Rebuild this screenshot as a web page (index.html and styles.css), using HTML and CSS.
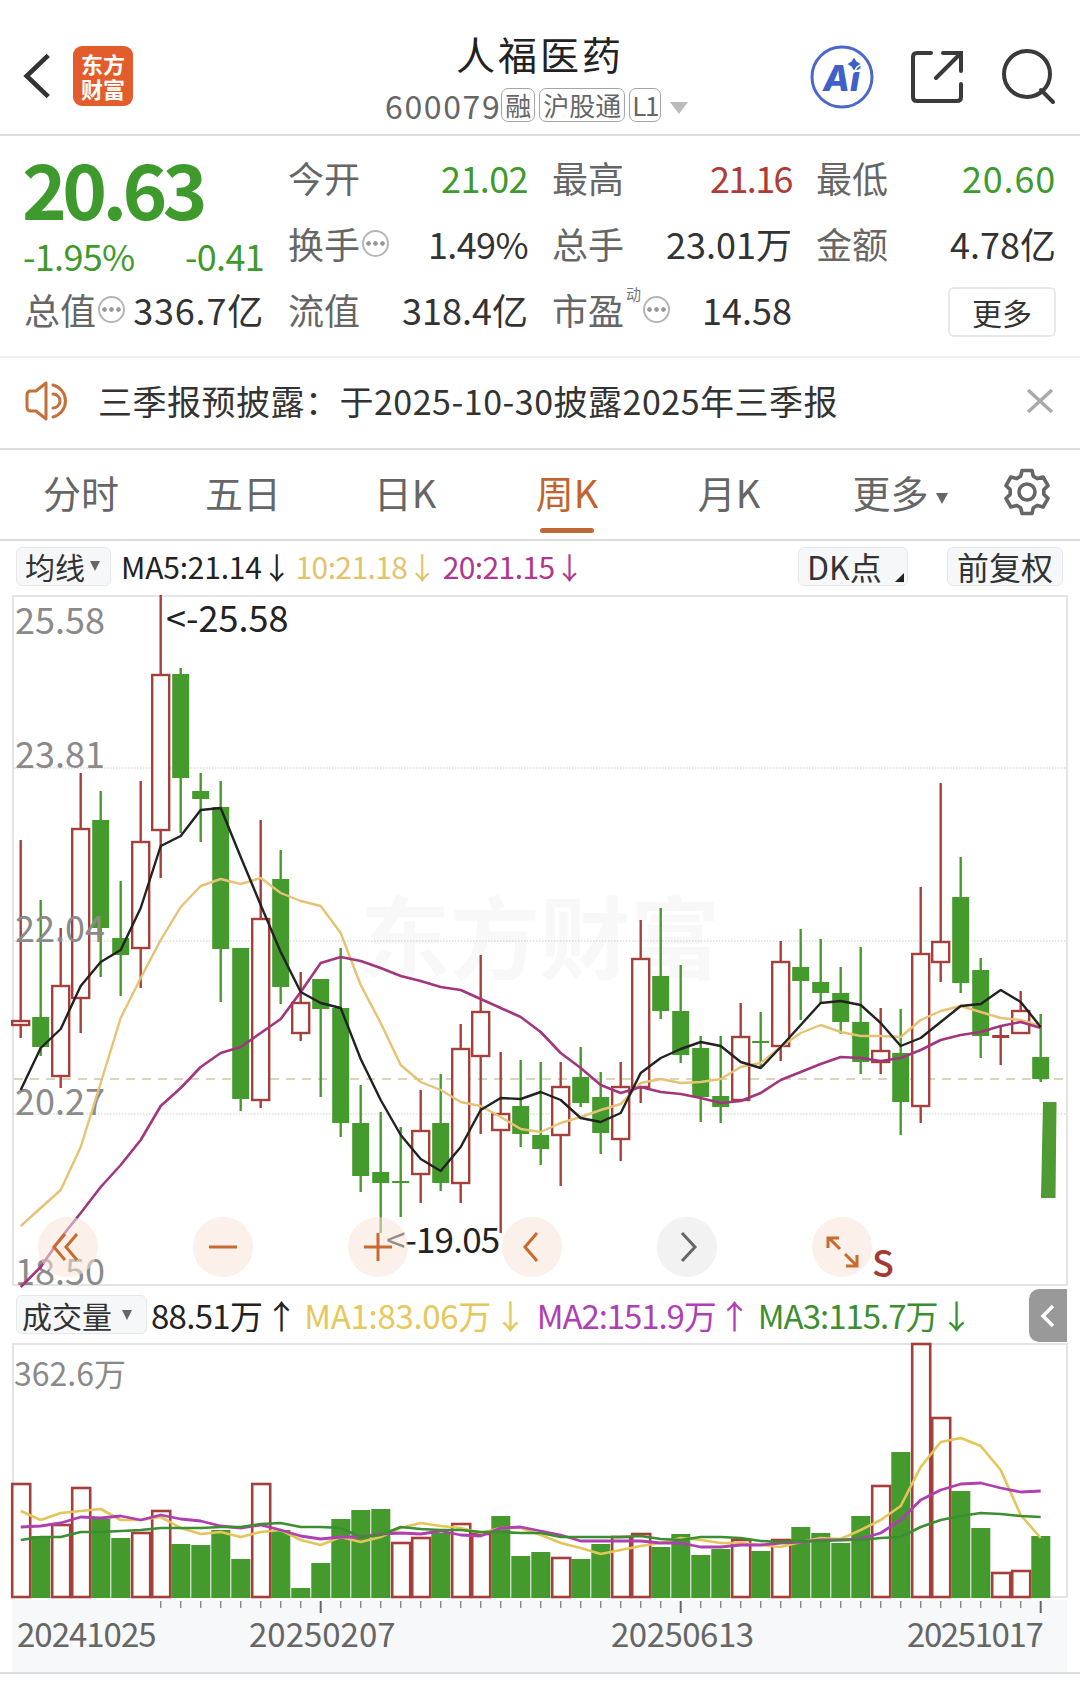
FILE: index.html
```html
<!DOCTYPE html>
<html>
<head>
    <meta charset="UTF-8">
    <title>人福医药</title>
    <link rel="stylesheet" href="styles.css">
</head>
<body>

<header class="top">
    <div class="top-left">
        <svg class="back" viewBox="0 0 32 50"><polyline points="28,3 5,25 28,47"/></svg>
        <div class="logo"><span>东方</span><span>财富</span></div>
    </div>
    <div class="top-mid">
        <div class="stock-name">人福医药</div>
        <div class="stock-sub">
            <span class="code">600079</span>
            <span class="tag">融</span>
            <span class="tag">沪股通</span>
            <span class="tag tag-l1">L1</span>
            <span class="sub-arrow"></span>
        </div>
    </div>
    <div class="top-right">
        <svg class="ic-ai" viewBox="0 0 66 66">
            <circle cx="33" cy="33" r="30"/>
            <text x="14" y="47">Ai</text>
            <path class="spark" d="M45 12 L48 17 L53 20 L48 23 L45 28 L42 23 L37 20 L42 17 Z"/>
        </svg>
        <svg class="ic-share" viewBox="0 0 52 52">
            <path d="M20 2 H6 Q2 2 2 6 V46 Q2 50 6 50 H46 Q50 50 50 46 V33"/>
            <path d="M25 27 L50 2 M32 2 H50 V20"/>
        </svg>
        <svg class="ic-search" viewBox="0 0 54 56">
            <circle cx="25" cy="25" r="23"/>
            <path d="M39 41 L51 53"/>
        </svg>
    </div>
</header>

<section class="quote">
    <div class="cell price green">20.63</div>
    <div class="cell"><span class="lb">今开</span><span class="val green tight">21.02</span></div>
    <div class="cell"><span class="lb">最高</span><span class="val red narrow">21.16</span></div>
    <div class="cell"><span class="lb">最低</span><span class="val green wide">20.60</span></div>

    <div class="cell change green"><span>-1.95%</span><span>-0.41</span></div>
    <div class="cell"><span class="lb">换手<i class="dots"></i></span><span class="val tight">1.49%</span></div>
    <div class="cell"><span class="lb">总手</span><span class="val">23.01万</span></div>
    <div class="cell"><span class="lb">金额</span><span class="val">4.78亿</span></div>

    <div class="cell"><span class="lb">总值<i class="dots"></i></span><span class="val wide">336.7亿</span></div>
    <div class="cell"><span class="lb">流值</span><span class="val">318.4亿</span></div>
    <div class="cell"><span class="lb">市盈<em class="dyn">动</em><i class="dots"></i></span><span class="val">14.58</span></div>
    <div class="cell end"><button class="more">更多</button></div>
</section>

<section class="notice">
    <svg class="ic-speaker" viewBox="0 0 50 42">
        <path d="M22 3 L12 11 H7 Q3 11 3 15 V27 Q3 31 7 31 H12 L22 39 Z"/>
        <path d="M29 14 A 7 7 0 0 1 29 28"/>
        <path d="M29 5 A 16.5 16.5 0 0 1 29 37"/>
    </svg>
    <span class="notice-text">三季报预披露：于2025-10-30披露2025年三季报</span>
    <svg class="ic-close" viewBox="0 0 28 26"><path d="M2 2 L26 24 M26 2 L2 24"/></svg>
</section>

<nav class="tabs">
    <a class="tab">分时</a>
    <a class="tab">五日</a>
    <a class="tab">日K</a>
    <a class="tab active">周K</a>
    <a class="tab">月K</a>
    <a class="tab tab-more">更多<span class="tab-arrow"></span></a>
    <svg class="ic-gear" viewBox="0 0 48 48">
        <polygon points="17.63,8.24 19.05,2.56 28.95,2.56 30.37,8.24 34.46,10.6 40.09,8.99 45.04,17.57 40.83,21.64 40.83,26.36 45.04,30.43 40.09,39.01 34.46,37.4 30.37,39.76 28.95,45.44 19.05,45.44 17.63,39.76 13.54,37.4 7.91,39.01 2.96,30.43 7.17,26.36 7.17,21.64 2.96,17.57 7.91,8.99 13.54,10.6"/>
        <circle cx="24" cy="24" r="8"/>
    </svg>
</nav>

<div class="ma-row">
    <span class="box box-ma">均线<span class="box-arrow"></span></span>
    <span class="ma-text ma-a">MA5:21.14↓</span>
    <span class="ma-text ma-b">10:21.18↓</span>
    <span class="ma-text ma-c">20:21.15↓</span>
    <span class="box box-dk">DK点<span class="corner"></span></span>
    <span class="box box-fq">前复权</span>
</div>

<svg id="kline" class="chart" viewBox="0 595 1080 691"></svg>

<div class="vol-row">
    <span class="box box-vol">成交量<span class="box-arrow"></span></span>
    <span class="vol-text">88.51万 ↑</span>
    <span class="vol-text v1">MA1:83.06万 ↓</span>
    <span class="vol-text v2">MA2:151.9万 ↑</span>
    <span class="vol-text v3">MA3:115.7万 ↓</span>
    <span class="collapse"><svg viewBox="0 0 16 26"><polyline points="13,3 3,13 13,23"/></svg></span>
</div>

<svg id="volume" class="chart" viewBox="0 1343 1080 257"></svg>
<svg id="axis" class="chart axis" viewBox="0 1600 1080 72"></svg>
<div class="page-end"></div>

<script src="chart.js"></script>
</body>
</html>
```

FILE: styles.css
```css
body {
    margin: 0;
    width: 1080px;
    background-color: #fff;
    font-family: "Noto Sans CJK SC", "Noto Sans", sans-serif;
    color: #333;
    overflow: hidden;
}

.green { color: #3f9a2d; }
.red { color: #b23a36; }

/* hlavicka */
.top {
    display: grid;
    grid-template-columns: 1fr auto 1fr;
    border-bottom: 2px solid #ddd;
    box-sizing: border-box;
    height: 136px;
}

.top-left {
    display: flex;
    align-items: center;
    padding: 22px 0 0 22px;
    box-sizing: border-box;
    height: 130px;
    gap: 21px;
}

.back {
    width: 30px;
    height: 48px;
    fill: none;
    stroke: #333;
    stroke-width: 5;
}

.logo {
    width: 60px;
    height: 60px;
    background-color: #e35d2c;
    border-radius: 9px;
    color: #fff;
    font-size: 22px;
    font-weight: bold;
    line-height: 25px;
    display: flex;
    flex-direction: column;
    align-items: center;
    justify-content: center;
}

.top-mid {
    display: flex;
    flex-direction: column;
    align-items: center;
    padding-top: 27px;
}

.stock-name {
    font-size: 39px;
    line-height: 52px;
    color: #222;
    letter-spacing: 3px;
}

.stock-sub {
    display: flex;
    align-items: center;
    margin-top: 8px;
    padding-right: 7px;
    gap: 4px;
}

.code {
    font-size: 32px;
    line-height: 36px;
    color: #666;
    letter-spacing: 1.6px;
    margin-right: -4px;
}

.tag {
    border: 1.5px solid #a5a5a5;
    border-radius: 7px;
    font-size: 26px;
    line-height: 32px;
    padding: 0 3px;
    color: #666;
}

.tag-l1 {
    padding: 0 2px;
    letter-spacing: -1.5px;
}

.sub-arrow {
    margin-left: 5px;
    margin-top: 6px;
    border-left: 9px solid transparent;
    border-right: 9px solid transparent;
    border-top: 12px solid #bbb;
}

.top-right {
    display: flex;
    justify-content: flex-end;
    align-items: center;
    padding: 44px 24px 0 0;
    height: 110px;
    box-sizing: border-box;
}

.ic-ai {
    width: 66px;
    height: 66px;
    margin-right: 36px;
}
.ic-ai circle { fill: none; stroke: #4a68cc; stroke-width: 3; }
.ic-ai text { font-family: Inter, sans-serif; font-size: 35px; font-weight: 800; font-style: italic; fill: #3f5fc9; }
.ic-ai .spark { fill: #3f5fc9; stroke: #fff; stroke-width: 1.5; }

.ic-share {
    width: 52px;
    height: 52px;
    margin-right: 39px;
    fill: none;
    stroke: #3a3a3a;
    stroke-width: 4;
    stroke-linecap: round;
}

.ic-search {
    width: 54px;
    height: 56px;
    fill: none;
    stroke: #3a3a3a;
    stroke-width: 4;
    stroke-linecap: round;
}

/* kotace */
.quote {
    display: grid;
    grid-template-columns: repeat(4, 240px);
    grid-auto-rows: 66px;
    column-gap: 24px;
    padding: 8px 0 14px 24px;
    border-bottom: 2px solid #f1f1f1;
}

.cell {
    display: flex;
    justify-content: space-between;
    align-items: center;
    font-size: 36px;
    white-space: nowrap;
}

.price {
    font-size: 76px;
    font-weight: bold;
    letter-spacing: -4.6px;
    padding-top: 20px;
    margin-left: -2px;
    line-height: 66px;
}

.change {
    font-size: 36px;
    padding-top: 24px;
    margin-left: -1px;
    letter-spacing: -0.7px;
}

.lb {
    display: flex;
    align-items: center;
    color: #666;
}

.val { color: #333; }
.val.green { color: #3f9a2d; }
.val.red { color: #b23a36; }
.tight { letter-spacing: -0.6px; }
.narrow { letter-spacing: -1.6px; }
.wide { letter-spacing: 0.8px; }

.dots {
    width: 23px;
    height: 23px;
    margin-left: 2px;
    border: 2px solid #b5b5b5;
    border-radius: 50%;
    background: radial-gradient(circle, #999 2px, transparent 2.5px) center / 7px 7px repeat-x;
}

.dyn {
    font-style: normal;
    font-size: 15px;
    line-height: 15px;
    color: #777;
    align-self: flex-start;
    margin-top: 3px;
    margin-left: 2px;
}

.end { justify-content: flex-end; }

.more {
    width: 108px;
    height: 50px;
    margin-top: 5px;
    background-color: #fff;
    border: 2px solid #e8e8e8;
    border-radius: 6px;
    font-family: inherit;
    font-size: 30px;
    color: #333;
    padding: 0;
}

/* oznameni */
.notice {
    display: flex;
    align-items: center;
    box-sizing: content-box;
    height: 86px;
    padding: 0 0 4px 24px;
    border-bottom: 2px solid #ddd;
}

.ic-speaker {
    width: 50px;
    height: 42px;
    fill: none;
    stroke: #c4703a;
    stroke-width: 3;
    stroke-linejoin: round;
    stroke-linecap: round;
}

.notice-text {
    font-size: 34px;
    color: #333;
    margin-left: 24px;
    margin-top: -2px;
    letter-spacing: 0.5px;
}

.ic-close {
    width: 28px;
    height: 26px;
    margin-left: auto;
    margin-right: 26px;
    fill: none;
    stroke: #aaa;
    stroke-width: 3.5;
}

/* zalozky */
.tabs {
    display: grid;
    grid-template-columns: repeat(6, 162px) 1fr;
    align-items: center;
    height: 89px;
    border-bottom: 2px solid #ddd;
}

.tab {
    position: relative;
    text-align: center;
    font-size: 38px;
    color: #666;
    line-height: 83px;
    padding-bottom: 6px;
}

.tab-more { margin-left: 18px; }

.tab.active { color: #c0652e; }

.tab.active::after {
    content: "";
    position: absolute;
    left: 54px;
    bottom: 6px;
    width: 54px;
    height: 5px;
    border-radius: 3px;
    background-color: #bf6a35;
}

.tab-arrow {
    display: inline-block;
    margin-left: 7px;
    vertical-align: 4px;
    border-left: 6px solid transparent;
    border-right: 6px solid transparent;
    border-top: 11px solid #666;
}

.ic-gear {
    width: 48px;
    height: 48px;
    margin-left: 31px;
    margin-bottom: 6px;
    fill: none;
    stroke: #666;
    stroke-width: 3.6;
    stroke-linejoin: round;
}

/* radek MA */
.ma-row {
    display: flex;
    align-items: center;
    box-sizing: border-box;
    height: 54px;
    padding: 0 0 4px 16px;
}

.box {
    display: flex;
    align-items: center;
    box-sizing: border-box;
    position: relative;
    height: 39px;
    font-size: 30px;
    background-color: #f6f7f9;
    border: 1.5px solid #e6e8ec;
    border-radius: 6px;
    padding-left: 8px;
    color: #333;
}

.box-ma { width: 95px; }
.box-dk { width: 110px; margin-left: auto; font-size: 32px; }
.box-fq { width: 116px; margin-left: 39px; margin-right: 17px; font-size: 32px; padding-left: 9px; }
.box-vol { width: 131px; padding-left: 5px; }
.box-vol .box-arrow { margin-left: 10px; }

.box-arrow {
    margin-left: 5px;
    border-left: 5px solid transparent;
    border-right: 5px solid transparent;
    border-top: 10px solid #666;
}

.corner {
    position: absolute;
    right: 3px;
    bottom: 3px;
    border-left: 9px solid transparent;
    border-bottom: 9px solid #222;
}

.ma-text {
    font-size: 30px;
    letter-spacing: -0.6px;
    white-space: nowrap;
}

.ma-a { color: #222; margin-left: 10px; letter-spacing: -0.2px; }
.ma-b { color: #e3c26c; margin-left: 4px; }
.ma-c { color: #b0378c; margin-left: 6px; }

/* grafy */
.chart {
    display: block;
    width: 1080px;
    overflow: visible;
}

#kline { height: 691px; }
#volume { height: 257px; }

.axis {
    height: 72px;
    background: linear-gradient(#f7f8fa, #f7f8fa) 12px 0 / 1055px 100% no-repeat;
}

.page-end {
    height: 9px;
    border-top: 2px solid #ddd;
}

/* radek objemu */
.vol-row {
    display: flex;
    align-items: center;
    height: 57px;
    padding-left: 16px;
    position: relative;
}

.vol-text {
    font-size: 33px;
    letter-spacing: -0.7px;
    word-spacing: -4px;
    white-space: nowrap;
    margin-left: 4px;
    color: #222;
}

.v1 { color: #e5c85c; margin-left: 7px; letter-spacing: -0.3px; }
.v2 { color: #b03fb5; margin-left: 10px; letter-spacing: -1.1px; }
.v3 { color: #3c8f30; margin-left: 8px; letter-spacing: -1px; }

.collapse {
    position: absolute;
    right: 13px;
    top: 3px;
    width: 38px;
    height: 53px;
    background-color: #999;
    border-radius: 10px 0 0 10px;
    display: flex;
    align-items: center;
    justify-content: center;
}

.collapse svg {
    width: 16px;
    height: 26px;
    fill: none;
    stroke: #fff;
    stroke-width: 3.5;
}
```

FILE: chart.js
```js
// high, top of body, bottom of body, low, r/g
const candles = [
    [840, 1021, 1025, 1038, "r"], [900, 1017, 1047, 1056, "g"], [928, 986, 1076, 1088, "r"],
    [773, 829, 998, 1033, "r"], [791, 820, 928, 977, "g"], [881, 938, 955, 996, "g"],
    [781, 842, 948, 988, "r"], [595, 675, 830, 878, "r"], [668, 674, 778, 833, "g"],
    [773, 791, 799, 842, "g"], [781, 807, 949, 1002, "g"], [948, 948, 1099, 1111, "g"],
    [820, 919, 1100, 1108, "r"], [850, 879, 987, 1004, "g"], [972, 1003, 1033, 1041, "r"],
    [979, 979, 1009, 1097, "g"], [948, 1008, 1123, 1137, "g"], [1085, 1123, 1176, 1192, "g"],
    [1112, 1172, 1183, 1233, "g"], [1127, 1181, 1183, 1217, "g"], [1090, 1131, 1174, 1203, "r"],
    [1074, 1123, 1183, 1191, "g"], [1024, 1049, 1183, 1203, "r"], [955, 1012, 1056, 1134, "r"],
    [1052, 1114, 1130, 1233, "r"], [1060, 1106, 1134, 1147, "g"], [1062, 1135, 1149, 1165, "g"],
    [1062, 1087, 1135, 1186, "r"], [1047, 1077, 1103, 1107, "g"], [1072, 1097, 1133, 1154, "g"],
    [1062, 1087, 1139, 1161, "r"], [920, 959, 1087, 1103, "r"], [908, 976, 1011, 1019, "g"],
    [965, 1011, 1055, 1063, "g"], [1036, 1048, 1097, 1122, "g"], [1036, 1096, 1107, 1123, "g"],
    [1003, 1037, 1100, 1100, "r"], [1012, 1041, 1043, 1068, "g"], [941, 962, 1046, 1061, "r"],
    [929, 967, 981, 1020, "g"], [939, 982, 993, 1003, "g"], [967, 993, 1022, 1034, "g"],
    [947, 1022, 1062, 1074, "g"], [1008, 1051, 1062, 1074, "r"], [1009, 1053, 1102, 1135, "g"],
    [887, 954, 1106, 1123, "r"], [783, 942, 962, 982, "r"], [857, 897, 983, 993, "g"],
    [958, 970, 1036, 1058, "g"], [1027, 1035, 1038, 1065, "s"], [991, 1011, 1033, 1033, "r"],
    [1014, 1057, 1079, 1082, "g"]
];

const ma5 = [1090,1048,1029,986,962,950,908,846,836,810,808,857,905,952,992,1003,1008,1059,1100,1135,1159,1171,1147,1110,1098,1099,1092,1100,1118,1122,1113,1073,1058,1049,1042,1046,1062,1068,1047,1025,1003,1001,1005,1023,1046,1038,1022,1006,1004,990,1002,1027];
const ma10 = [1226,1208,1190,1147,1083,1018,978,940,907,886,879,884,878,893,901,906,933,985,1023,1065,1082,1090,1102,1106,1117,1129,1132,1123,1117,1110,1104,1083,1079,1083,1082,1079,1067,1063,1047,1033,1025,1032,1036,1036,1037,1020,1011,1006,1012,1018,1020,1026];
const ma20 = [1287,1267,1238,1213,1187,1165,1140,1106,1088,1067,1053,1047,1033,1019,992,963,957,961,968,976,981,987,990,999,1008,1017,1032,1053,1068,1085,1093,1087,1092,1094,1098,1103,1101,1093,1080,1072,1064,1057,1058,1061,1058,1050,1040,1035,1032,1026,1022,1028];

// top of bar, r/g
const vols = [[1483,"r"],[1536,"g"],[1524,"r"],[1487,"r"],[1519,"g"],[1538,"g"],[1532,"r"],[1510,"r"],[1544,"g"],[1545,"g"],[1530,"g"],[1559,"g"],[1483,"r"],[1530,"g"],[1588,"g"],[1563,"g"],[1519,"g"],[1510,"g"],[1509,"g"],[1542,"r"],[1537,"r"],[1533,"g"],[1523,"r"],[1533,"r"],[1516,"g"],[1556,"g"],[1552,"g"],[1557,"r"],[1559,"g"],[1544,"g"],[1536,"r"],[1533,"r"],[1547,"g"],[1534,"g"],[1555,"g"],[1549,"g"],[1539,"r"],[1551,"g"],[1539,"r"],[1527,"g"],[1533,"g"],[1543,"g"],[1516,"g"],[1485,"r"],[1452,"g"],[1343,"r"],[1417,"r"],[1491,"g"],[1528,"g"],[1572,"r"],[1570,"r"],[1536,"g"]];

const vma1 = [1511,1520,1513,1511,1509,1520,1520,1517,1528,1534,1532,1537,1532,1530,1540,1545,1537,1542,1537,1528,1523,1526,1528,1533,1528,1528,1535,1543,1548,1554,1550,1546,1543,1538,1540,1543,1543,1545,1547,1542,1538,1539,1530,1520,1506,1467,1442,1438,1446,1470,1515,1538];
const vma2 = [1527,1526,1523,1517,1518,1516,1520,1515,1519,1521,1526,1528,1525,1530,1536,1539,1537,1537,1534,1533,1534,1531,1535,1536,1528,1527,1531,1535,1541,1541,1541,1541,1543,1543,1547,1547,1545,1545,1543,1542,1540,1540,1539,1533,1520,1500,1490,1484,1483,1488,1492,1491];
const vma3 = [1540,1537,1537,1532,1532,1531,1530,1528,1528,1528,1527,1527,1524,1523,1527,1527,1528,1537,1535,1527,1529,1530,1530,1532,1532,1533,1533,1537,1537,1537,1537,1536,1539,1540,1537,1537,1538,1541,1542,1541,1541,1540,1540,1538,1537,1527,1520,1516,1513,1514,1516,1517];

const RED = "#a53f39";
const GREEN = "#449a2c";

function cx(i) {
    return 20.7 + 20 * i;
}

function line(ys, color, width) {
    const pts = ys.map((y, i) => cx(i) + "," + y).join(" ");
    return `<polyline points="${pts}" fill="none" stroke="${color}" stroke-width="${width}" stroke-linejoin="round"/>`;
}

function gridLabel(txt, y) {
    return `<text x="15" y="${y}" font-size="36" fill="#8a8a8a">${txt}</text>`;
}

function drawKline() {
    let s = "";
    s += `<rect x="13" y="596" width="1054" height="689" fill="none" stroke="#e4e4e4" stroke-width="2"/>`;
    s += `<text x="360" y="972" font-size="90" font-weight="bold" fill="#f8f8f8">东方财富</text>`;
    [768, 941, 1114].forEach(y => {
        s += `<line x1="14" x2="1066" y1="${y}" y2="${y}" stroke="#ccc" stroke-width="1" stroke-dasharray="1.5 1.5"/>`;
    });
    s += `<line x1="14" x2="1066" y1="1079" y2="1079" stroke="#cfc6a8" stroke-width="1.5" stroke-dasharray="9 7"/>`;

    candles.forEach((c, i) => {
        const x = cx(i);
        const col = c[4] === "g" ? GREEN : RED;
        s += `<line x1="${x}" x2="${x}" y1="${c[0]}" y2="${c[3]}" stroke="${col}" stroke-width="2.4"/>`;
        if (c[4] === "r") {
            s += `<rect x="${x - 8.5}" y="${c[1]}" width="17" height="${c[2] - c[1]}" fill="#fff" stroke="${col}" stroke-width="2.4"/>`;
        } else {
            s += `<rect x="${x - 8.5}" y="${c[1]}" width="17" height="${c[2] - c[1]}" fill="${col}"/>`;
        }
    });
    // posledni sloupec je vpravo mimo mrizku
    s += `<polygon points="1043,1102 1056.5,1102 1055.5,1198 1041,1198" fill="#4f9a33"/>`;

    s += gridLabel("25.58", 634) + gridLabel("23.81", 768) + gridLabel("22.04", 942) + gridLabel("20.27", 1115) + gridLabel("18.50", 1285);

    s += line(ma10, "#e6c274", 2.4);
    s += line(ma20, "#a3357f", 2.6);
    s += line(ma5, "#222", 2.4);

    s += `<text x="166" y="632" font-size="36" fill="#222">&lt;-25.58</text>`;
    s += `<text x="386" y="1253" font-size="35" letter-spacing="-0.8" fill="#222">&lt;-19.05</text>`;
    s += `<text x="872" y="1277" font-size="36" font-weight="500" fill="#a53a33">S</text>`;

    // tlacitka pres graf
    [68, 223, 378, 532, 842].forEach(x => {
        s += `<circle cx="${x}" cy="1247" r="30" fill="#f8e4d8" fill-opacity="0.55"/>`;
    });
    s += `<circle cx="687" cy="1247" r="30" fill="#f2f2f2"/>`;
    const ic = `fill="none" stroke="#c96b2e" stroke-width="3"`;
    s += `<path d="M65 1234 L54 1247 L65 1260 M77 1234 L66 1247 L77 1260" ${ic}/>`;
    s += `<path d="M209 1247 H237" ${ic}/>`;
    s += `<path d="M364 1247 H392 M378 1233 V1261" ${ic}/>`;
    s += `<path d="M537 1233 L525 1247 L537 1261" ${ic}/>`;
    s += `<path d="M682 1233 L695 1247 L682 1261" fill="none" stroke="#666" stroke-width="3"/>`;
    s += `<path d="M829 1238 L840 1249 M828 1248 V1238 H839 M845 1254 L856 1265 M857 1255 V1266 H846" ${ic}/>`;
    document.getElementById("kline").innerHTML = s;
}

function drawVolume() {
    let s = "";
    s += `<path d="M13 1597 V1344 H1067 V1597 H13" fill="none" stroke="#e4e4e4" stroke-width="2"/>`;
    s += `<text x="14" y="1386" font-size="32" fill="#8a8a8a">362.6万</text>`;
    vols.forEach((v, i) => {
        const x = cx(i);
        if (v[1] === "r") {
            s += `<rect x="${x - 8.5}" y="${v[0] + 1}" width="18" height="${1596 - v[0]}" fill="#fff" stroke="${RED}" stroke-width="2.6"/>`;
        } else {
            s += `<rect x="${x - 9.4}" y="${v[0]}" width="19" height="${1598 - v[0]}" fill="${GREEN}"/>`;
        }
    });
    s += line(vma1, "#e3c55a", 2.6);
    s += line(vma2, "#b03fb0", 2.8);
    s += line(vma3, "#3c8f30", 2.6);
    document.getElementById("volume").innerHTML = s;
}

function drawAxis() {
    let s = "";
    for (let i = 7; i < 52; i++) {
        const x = cx(i);
        const major = i === 15 || i === 33 || i === 51;
        const col = major ? "#666" : "#888";
        s += `<line x1="${x}" x2="${x}" y1="1601" y2="${major ? 1613 : 1608}" stroke="${col}" stroke-width="${major ? 2 : 1.4}"/>`;
    }
    [["20241025", 17, -1], ["20250207", 249, 0], ["20250613", 611, -0.5], ["20251017", 907, -1.4]].forEach(t => {
        s += `<text x="${t[1]}" y="1647" font-size="33" letter-spacing="${t[2]}" fill="#666">${t[0]}</text>`;
    });
    document.getElementById("axis").innerHTML = s;
}

drawKline();
drawVolume();
drawAxis();
```
